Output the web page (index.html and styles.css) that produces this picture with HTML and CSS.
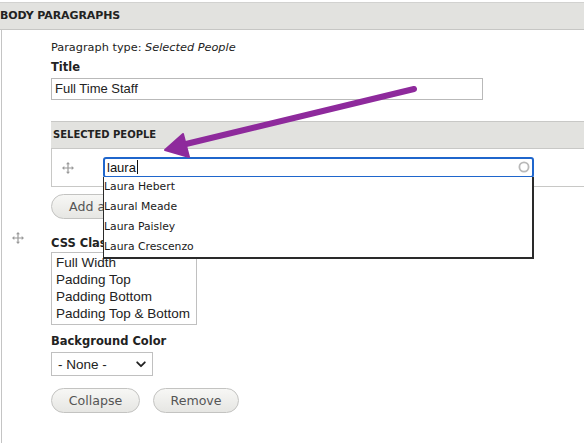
FILE: index.html
```html
<!DOCTYPE html>
<html>
<head>
<meta charset="utf-8">
<link rel="stylesheet" href="styles.css">
</head>
<body>
<div class="panel">
  <div class="panel-head">BODY PARAGRAPHS</div>
  <div class="panel-body">
    <div class="handle-col">
      <svg class="drag" viewBox="0 0 12 12" width="12" height="12"><path d="M6 1.5V10.5M1.5 6H10.5" stroke="#9a9a9a" stroke-width="1.2"/><path d="M6 0L8 2.3H4ZM6 12L8 9.7H4ZM0 6L2.3 4V8ZM12 6L9.7 4V8Z" fill="#9a9a9a"/></svg>
    </div>
    <div class="content">
      <div class="ptype">Paragraph type: <em>Selected People</em></div>
      <div class="label">Title</div>
      <div class="text-input title-input">Full Time Staff</div>

      <div class="people">
        <div class="people-head">SELECTED PEOPLE</div>
        <div class="people-row">
          <div class="row-handle">
            <svg class="drag" viewBox="0 0 12 12" width="12" height="12"><path d="M6 1.5V10.5M1.5 6H10.5" stroke="#9a9a9a" stroke-width="1.2"/><path d="M6 0L8 2.3H4ZM6 12L8 9.7H4ZM0 6L2.3 4V8ZM12 6L9.7 4V8Z" fill="#9a9a9a"/></svg>
          </div>
          <div class="ac-wrap">
            <div class="ac-input">laura<span class="caret"></span></div>
            <svg class="spinner" viewBox="0 0 12 12" width="12" height="12"><circle cx="6" cy="6" r="4.6" fill="none" stroke="#b9b9b9" stroke-width="1.8"/></svg>
            <ul class="ac-list">
              <li>Laura Hebert</li>
              <li>Laural Meade</li>
              <li>Laura Paisley</li>
              <li>Laura Crescenzo</li>
            </ul>
          </div>
        </div>
      </div>

      <div class="btn add-btn">Add another item</div>

      <div class="label css-label">CSS Classes</div>
      <div class="listbox">
        <div>Full Width</div>
        <div>Padding Top</div>
        <div>Padding Bottom</div>
        <div>Padding Top &amp; Bottom</div>
      </div>

      <div class="label bg-label">Background Color</div>
      <div class="select">
        <span>- None -</span>
        <svg class="chev" viewBox="0 0 10 7" width="10" height="7"><path d="M1.2 1.3L5 5.2L8.8 1.3" fill="none" stroke="#222" stroke-width="1.8" stroke-linecap="round" stroke-linejoin="round"/></svg>
      </div>

      <div class="actions">
        <div class="btn">Collapse</div>
        <div class="btn">Remove</div>
      </div>
    </div>
  </div>
</div>

<svg class="arrow" width="584" height="443" viewBox="0 0 584 443">
  <line x1="414" y1="89" x2="186" y2="144" stroke="#8e2a9c" stroke-width="6" stroke-linecap="round"/>
  <polygon points="165,150 183,134 189,157" fill="#8e2a9c" stroke="#8e2a9c" stroke-width="2" stroke-linejoin="round"/>
</svg>
</body>
</html>
```

FILE: styles.css
```css
html, body {
  margin: 0;
  padding: 0;
  background: #fff;
  overflow: hidden;
}
body {
  width: 584px;
  height: 443px;
  position: relative;
  font-family: "DejaVu Sans", sans-serif;
  color: #222;
}
.panel {
  padding-top: 2px;
}
.panel-head {
  border-top: 1px solid #d2d2d0;
  border-bottom: 1px solid #c6c6c4;
  background: #e2e2df;
  height: 26px;
  line-height: 26px;
  font-size: 11px;
  font-weight: bold;
  padding-left: 0;
  letter-spacing: -0.1px;
}
.panel-body {
  display: flex;
  margin-left: 1px;
  border-left: 1px solid #c4c4c4;
}
.handle-col {
  flex: 0 0 49px;
  display: flex;
  align-items: center;
  padding-left: 10px;
  box-sizing: border-box;
}
.drag {
  display: block;
}
.content {
  flex: 1 1 auto;
  min-width: 0;
  padding-top: 10px;
  padding-bottom: 32px;
  font-size: 11.3px;
}
.ptype {
  line-height: 15px;
  height: 15px;
  color: #222;
}
.ptype em {
  font-style: oblique;
}
.label {
  font-weight: bold;
  font-size: 11.5px;
  line-height: 16px;
  margin-top: 4px;
}
.text-input {
  box-sizing: border-box;
  border: 1px solid #b9b9b9;
  height: 22px;
  line-height: 20px;
  font-family: "Liberation Sans", Arial, sans-serif;
  font-size: 13px;
  padding-left: 3px;
  color: #222;
}
.title-input {
  width: 432px;
  margin-top: 3px;
}
.people {
  margin-top: 21px;
  width: 600px;
}
.people-head {
  border-top: 1px solid #c8c8c6;
  border-bottom: 1px solid #c8c8c6;
  background: #e2e2df;
  height: 26px;
  line-height: 26px;
  font-weight: bold;
  font-size: 10px;
  padding-left: 2px;
}
.people-row {
  display: flex;
  align-items: center;
  height: 37px;
  border-left: 1px solid #c8c8c6;
  border-bottom: 1px solid #c8c8c6;
}
.row-handle {
  flex: 0 0 51px;
  padding-left: 10px;
  box-sizing: border-box;
}
.ac-wrap {
  position: relative;
  flex: 0 0 431px;
  height: 21px;
}
.ac-input {
  box-sizing: border-box;
  height: 21px;
  border: 2px solid #1f66cc;
  border-radius: 3px;
  font-family: "Liberation Sans", Arial, sans-serif;
  font-size: 13px;
  line-height: 17px;
  padding-left: 2px;
  color: #111;
}
.caret {
  display: inline-block;
  width: 1px;
  height: 14px;
  background: #111;
  vertical-align: -2px;
  margin-left: 1px;
}
.spinner {
  position: absolute;
  right: 4px;
  top: 4px;
}
.ac-list {
  position: absolute;
  left: 0;
  top: 20px;
  width: 431px;
  box-sizing: border-box;
  margin: 0;
  padding: 0;
  list-style: none;
  background: #fff;
  border: 1px solid #2a2a2a;
  border-top: none;
  border-right-width: 2px;
  border-bottom-width: 2px;
  z-index: 2;
  font-size: 10.8px;
}
.ac-list li {
  height: 20px;
  line-height: 20px;
  padding-left: 0;
  color: #1a1a1a;
}
.btn {
  display: inline-flex;
  align-items: center;
  justify-content: center;
  box-sizing: border-box;
  height: 25px;
  border: 1px solid #c3c3c1;
  border-radius: 13px;
  background: linear-gradient(#f7f7f5, #e6e6e3);
  color: #555;
  font-size: 12.6px;
  padding: 0 17px;
  white-space: nowrap;
}
.add-btn {
  margin-top: 7px;
  width: 150px;
  justify-content: flex-start;
}
.css-label {
  margin-top: 16px;
}
.listbox {
  box-sizing: border-box;
  width: 146px;
  height: 73px;
  margin-top: 1px;
  border: 1px solid #c0c0c0;
  padding: 1px 0 0 4px;
  font-family: "Liberation Sans", Arial, sans-serif;
  font-size: 13.5px;
  line-height: 17px;
  color: #222;
}
.bg-label {
  margin-top: 8px;
}
.select {
  box-sizing: border-box;
  width: 102px;
  height: 24px;
  margin-top: 3px;
  border: 1px solid #c0c0c0;
  display: flex;
  align-items: center;
  justify-content: space-between;
  padding: 0 6px 0 6px;
  font-family: "Liberation Sans", Arial, sans-serif;
  font-size: 13.5px;
  color: #222;
}
.actions {
  display: flex;
  gap: 13px;
  margin-top: 12px;
}
.actions .btn:first-child {
  width: 89px;
}
.actions .btn:last-child {
  width: 86px;
}
.arrow {
  position: absolute;
  left: 0;
  top: 0;
  z-index: 5;
  pointer-events: none;
}
```
